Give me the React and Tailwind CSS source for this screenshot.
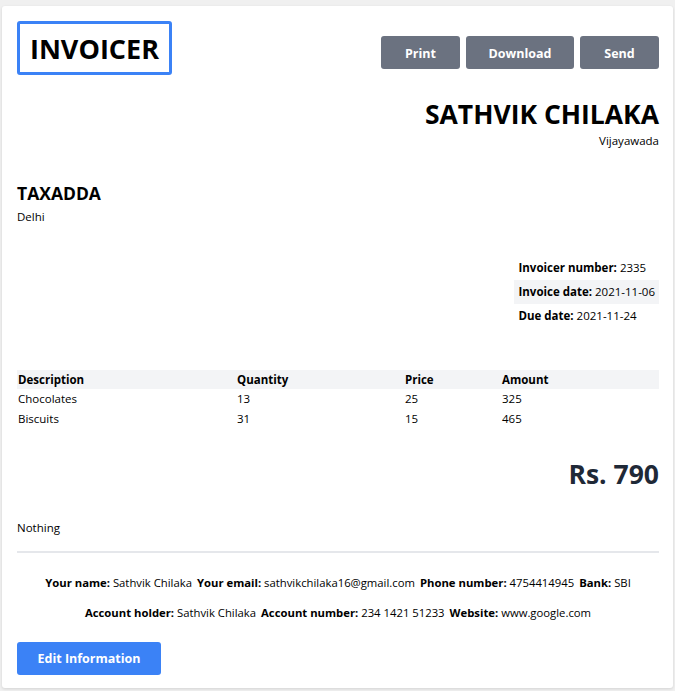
export default function App() {
  const font = { fontFamily: '"Open Sans", "Noto Sans", sans-serif' };
  return (
    <div className="min-h-[691px] bg-[#f0f0f0] pt-[6px] pl-[2px]" style={font}>
      <div className="w-[671px] h-[682px] bg-white rounded-[3px] shadow-[0_1px_3px_rgba(0,0,0,0.12)] pl-[15px] pr-[14px] pt-[15px] text-black">
        <div className="flex justify-between items-start">
          <div className="w-[155px] h-[54px] border-[3px] border-[#3b82f6] rounded-[3px] flex items-center justify-center">
            <span className="text-[27px] font-bold leading-none">INVOICER</span>
          </div>
          <div className="flex gap-[6px] mt-[15px]">
            <button className="w-[79px] h-[33px] pt-[3px] bg-[#6b7280] rounded-[3px] text-white text-[12.5px] font-bold">Print</button>
            <button className="w-[108px] h-[33px] pt-[3px] bg-[#6b7280] rounded-[3px] text-white text-[12.5px] font-bold">Download</button>
            <button className="w-[79px] h-[33px] pt-[3px] bg-[#6b7280] rounded-[3px] text-white text-[12.5px] font-bold">Send</button>
          </div>
        </div>

        <div className="flex flex-col items-end mt-[21px]">
          <div className="text-[26.5px] font-bold leading-[36px]">SATHVIK CHILAKA</div>
          <div className="text-[11.5px] leading-[16px] mt-[1px]">Vijayawada</div>
        </div>

        <div className="mt-[32px]">
          <div className="text-[17.5px] font-bold leading-[24px]">TAXADDA</div>
          <div className="text-[11.5px] leading-[16px] mt-[4px]">Delhi</div>
        </div>

        <div className="flex justify-end mt-[31px]">
          <div className="text-[11.5px] whitespace-nowrap">
            <div className="h-[24px] flex items-center px-[4px]"><b>Invoicer number:</b>&nbsp;2335</div>
            <div className="h-[24px] flex items-center px-[4px] bg-[#f3f4f6]"><b>Invoice date:</b>&nbsp;2021-11-06</div>
            <div className="h-[24px] flex items-center px-[4px]"><b>Due date:</b>&nbsp;2021-11-24</div>
          </div>
        </div>

        <div className="mt-[42px] text-[11.5px]">
          <div className="grid grid-cols-[219px_168px_97px_1fr] bg-[#f3f4f6] h-[19px] items-center font-bold px-[1px]">
            <div>Description</div><div>Quantity</div><div>Price</div><div>Amount</div>
          </div>
          <div className="grid grid-cols-[219px_168px_97px_1fr] h-[20px] items-center px-[1px]">
            <div>Chocolates</div><div>13</div><div>25</div><div>325</div>
          </div>
          <div className="grid grid-cols-[219px_168px_97px_1fr] h-[20px] items-center px-[1px]">
            <div>Biscuits</div><div>31</div><div>15</div><div>465</div>
          </div>
        </div>

        <div className="flex justify-end mt-[27px]">
          <div className="text-[26.5px] font-bold text-[#1f2937] leading-[36px]">Rs. 790</div>
        </div>

        <div className="mt-[28px] text-[11.5px] leading-[16px]">Nothing</div>

        <div className="mt-[15px] border-t-2 border-[#e5e7eb]" />

        <div className="mt-[22px] flex flex-col items-center gap-[14px] text-[11.3px] leading-[16px]">
          <div className="flex gap-[5px]">
            <span><b>Your name:</b> Sathvik Chilaka</span>
            <span><b>Your email:</b> sathvikchilaka16@gmail.com</span>
            <span><b>Phone number:</b> 4754414945</span>
            <span><b>Bank:</b> SBI</span>
          </div>
          <div className="flex gap-[5px]">
            <span><b>Account holder:</b> Sathvik Chilaka</span>
            <span><b>Account number:</b> 234 1421 51233</span>
            <span><b>Website:</b> www.google.com</span>
          </div>
        </div>

        <button className="mt-[21px] w-[144px] h-[33px] pt-[2px] bg-[#3b82f6] rounded-[3px] text-white text-[12.5px] font-bold">Edit Information</button>
      </div>
    </div>
  );
}
